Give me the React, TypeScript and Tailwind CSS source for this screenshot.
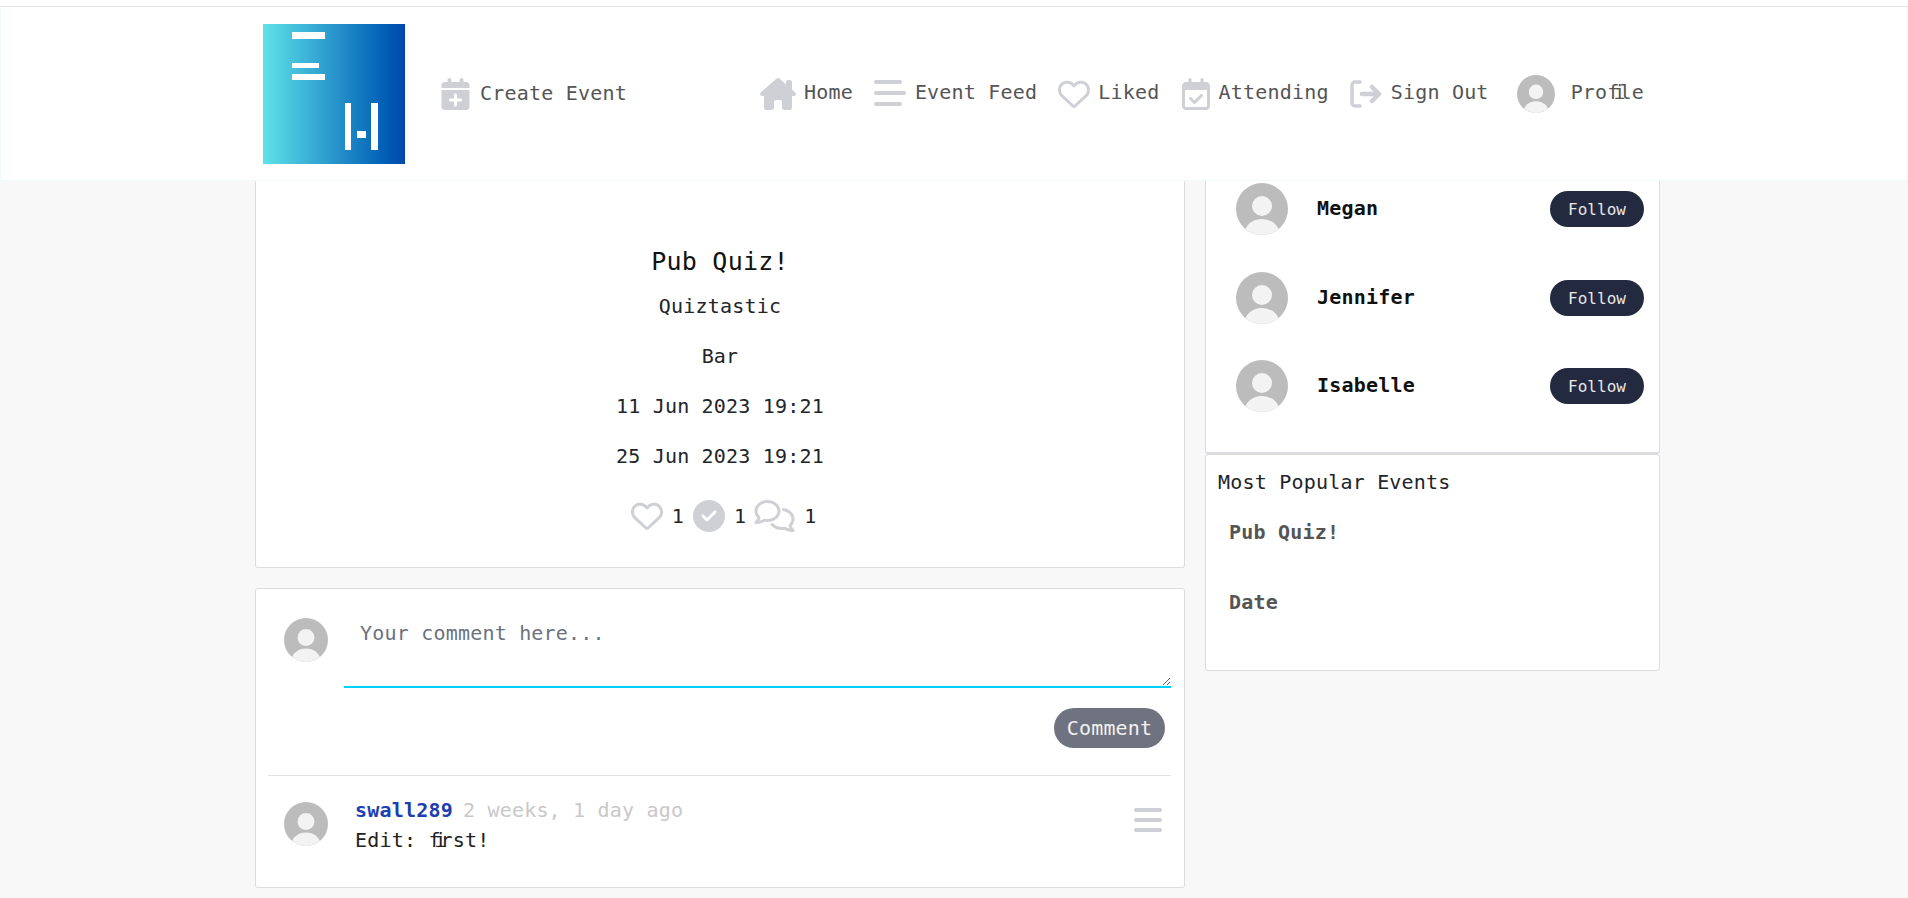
import React from 'react';
import {
  FaCalendarPlus,
  FaCircleCheck,
  FaHouseChimney,
  FaRegCalendarCheck,
  FaRegComments,
  FaRegHeart,
} from 'react-icons/fa6';

const Avatar: React.FC<{ className: string }> = ({ className }) => (
  <svg viewBox="0 0 52 52" className={`shrink-0 ${className}`}>
    <defs>
      <clipPath id="avatar-clip">
        <circle cx="26" cy="26" r="26" />
      </clipPath>
    </defs>
    <circle cx="26" cy="26" r="26" fill="#bcbcbc" />
    <g clipPath="url(#avatar-clip)">
      <circle cx="26" cy="23" r="10" fill="#f3f3f3" />
      <ellipse cx="26" cy="50" rx="17" ry="14" fill="#f3f3f3" />
    </g>
  </svg>
);

const Logo = () => (
  <div className="w-[142px] h-[140px] shrink-0 bg-linear-to-r from-[#5fe3e8] to-[#0047ab]">
    <svg viewBox="0 0 142 140" className="w-full h-full" fill="#fff">
      <rect x="29" y="8" width="33" height="7" />
      <rect x="29" y="39" width="27" height="5" />
      <rect x="29" y="50" width="33" height="6" />
      <rect x="82" y="79" width="6" height="47" />
      <rect x="94" y="107" width="9" height="7" />
      <rect x="108" y="79" width="7" height="47" />
    </svg>
  </div>
);

const FeedIcon: React.FC<{ className: string }> = ({ className }) => (
  <svg viewBox="0 0 32 28" className={className} fill="#ced0d5">
    <rect x="0" y="1" width="28" height="4" rx="2" />
    <rect x="0" y="12" width="32" height="4" rx="2" />
    <rect x="0" y="23" width="28" height="4" rx="2" />
  </svg>
);

const SignOutIcon: React.FC<{ className: string }> = ({ className }) => (
  <svg viewBox="0 0 32 28" className={className} fill="none" stroke="#ced0d5" strokeWidth="3.5" strokeLinecap="round" strokeLinejoin="round">
    <path d="M10 2H5a3 3 0 0 0-3 3v18a3 3 0 0 0 3 3h5" />
    <path d="M12 14h16M22 7l7 7-7 7" strokeWidth="4.5" />
  </svg>
);

const Fi = () => <span className="tracking-[-6px]">fi</span>;

const followers = ['Megan', 'Jennifer', 'Isabelle'];

export default function App() {
  return (
    <div className="h-[898px] overflow-hidden bg-[#f8f8f8] font-['DejaVu_Sans_Mono','Liberation_Mono',monospace] text-[20px] leading-[30px] tracking-[0.2px] text-[#212529]">
      {/* Top bar */}
      <header className="bg-white">
        <div className="h-[7px] border-b border-[#e0e4ea]" />
        <div className="h-[174px] flex items-center pl-[262px] border-b border-x border-[#f0fafa] text-[#555]">
          <Logo />
          <FaCalendarPlus className="ml-[36px] w-[29px] h-[32px] text-[#ced0d5] shrink-0" />
          <span className="ml-[10px] mb-[2px]">Create Event</span>

          <FaHouseChimney className="ml-[133px] w-[36px] h-[32px] text-[#ced0d5] shrink-0" />
          <span className="ml-[8px] mb-[3px]">Home</span>
          <FeedIcon className="ml-[21px] w-[32px] h-[28px] mb-[2px] shrink-0" />
          <span className="ml-[9px] mb-[3px]">Event Feed</span>
          <FaRegHeart className="ml-[21px] w-[32px] h-[32px] text-[#ced0d5] shrink-0" />
          <span className="ml-[8px] mb-[3px]">Liked</span>
          <FaRegCalendarCheck className="ml-[22px] w-[28px] h-[32px] text-[#ced0d5] shrink-0" />
          <span className="ml-[9px] mb-[3px]">Attending</span>
          <SignOutIcon className="ml-[21px] w-[32px] h-[28px] shrink-0" />
          <span className="ml-[9px] mb-[3px]">Sign Out</span>
          <Avatar className="ml-[28px] w-[38px] h-[38px]" />
          <span className="ml-[16px] mb-[3px]">Pro<Fi />le</span>
        </div>
      </header>

      <main className="flex pl-[255px] gap-[20px] items-start">
        {/* Event column */}
        <div className="w-[930px] shrink-0">
          <section className="h-[387px] bg-white border-x border-b border-[#dcdcdc] rounded-b-[3px] pt-[66px] text-center">
            <h2 className="text-[25px] tracking-[0.25px] text-[#111]">Pub Quiz!</h2>
            <p className="mt-[14px]">Quiztastic</p>
            <p className="mt-[20px]">Bar</p>
            <p className="mt-[20px]">11 Jun 2023 19:21</p>
            <p className="mt-[20px]">25 Jun 2023 19:21</p>
            <div className="mt-[29px] flex items-center justify-center h-[32px] pl-[7px]">
              <FaRegHeart className="w-[32px] h-[32px] text-[#ced0d5]" />
              <span className="ml-[9px]">1</span>
              <FaCircleCheck className="ml-[9px] w-[32px] h-[32px] text-[#ced0d5]" />
              <span className="ml-[9px]">1</span>
              <FaRegComments className="ml-[8px] w-[41px] h-[32px] text-[#ced0d5]" />
              <span className="ml-[9px]">1</span>
            </div>
          </section>

          <section className="mt-[20px] h-[300px] bg-white border border-[#dcdcdc] rounded-[3px] pl-[12px] pr-[13px]">
            <div className="flex pt-[29px] pl-[16px]">
              <Avatar className="w-[44px] h-[44px]" />
              <textarea
                placeholder="Your comment here..."
                className="ml-[16px] mt-[-7px] w-[827px] h-[77px] px-[16px] py-[7px] border-b-2 border-[#00d2ff] outline-none placeholder:text-[#6b7280]"
              />
            </div>
            <div className="flex justify-end mt-[20px] pr-[6px]">
              <button className="h-[40px] w-[111px] rounded-full bg-[#6f7380] text-[#f1f1f1]">Comment</button>
            </div>
            <div className="mt-[27px] border-t border-[#e2e2e2] flex pt-[26px] pl-[16px] pr-[9px]">
              <Avatar className="w-[44px] h-[44px]" />
              <div className="ml-[10px] pl-[17px] flex-1 mt-[-7px]">
                <p>
                  <a className="font-bold text-[#1f3fb0]">swall289</a>
                  <span className="ml-[10px] text-[#c8c8c8]">2 weeks, 1 day ago</span>
                </p>
                <p className="text-[#222]">Edit: <Fi />rst!</p>
              </div>
              <svg viewBox="0 0 28 24" className="mt-[6px] w-[28px] h-[24px] shrink-0" fill="#ced0d5">
                <rect width="28" height="4" rx="2" />
                <rect y="10" width="28" height="4" rx="2" />
                <rect y="20" width="28" height="4" rx="2" />
              </svg>
            </div>
          </section>
        </div>

        {/* Sidebar */}
        <aside className="w-[455px] shrink-0">
          <section className="h-[273px] bg-white border-x border-b-2 border-[#dcdce2] rounded-b-[3px] pt-[2px] pl-[30px] pr-[15px] flex flex-col gap-[36.5px]">
            {followers.map(name => (
              <div key={name} className="flex items-center h-[52px]">
                <Avatar className="w-[52px] h-[52px]" />
                <span className="ml-[29px] mb-[2px] font-bold text-[#111]">{name}</span>
                <button className="ml-auto w-[94px] h-[36px] pt-[2px] rounded-full bg-[#232a40] text-[#e8e8e8] text-[16px] tracking-normal">
                  Follow
                </button>
              </div>
            ))}
          </section>
          <section className="h-[217px] bg-white border border-[#dcdcdc] rounded-[3px] pt-[12px] pl-[12px]">
            <h3>Most Popular Events</h3>
            <p className="mt-[20px] pl-[11px] font-bold text-[#555]">Pub Quiz!</p>
            <p className="mt-[40px] pl-[11px] font-bold text-[#555]">Date</p>
          </section>
        </aside>
      </main>
    </div>
  );
}
